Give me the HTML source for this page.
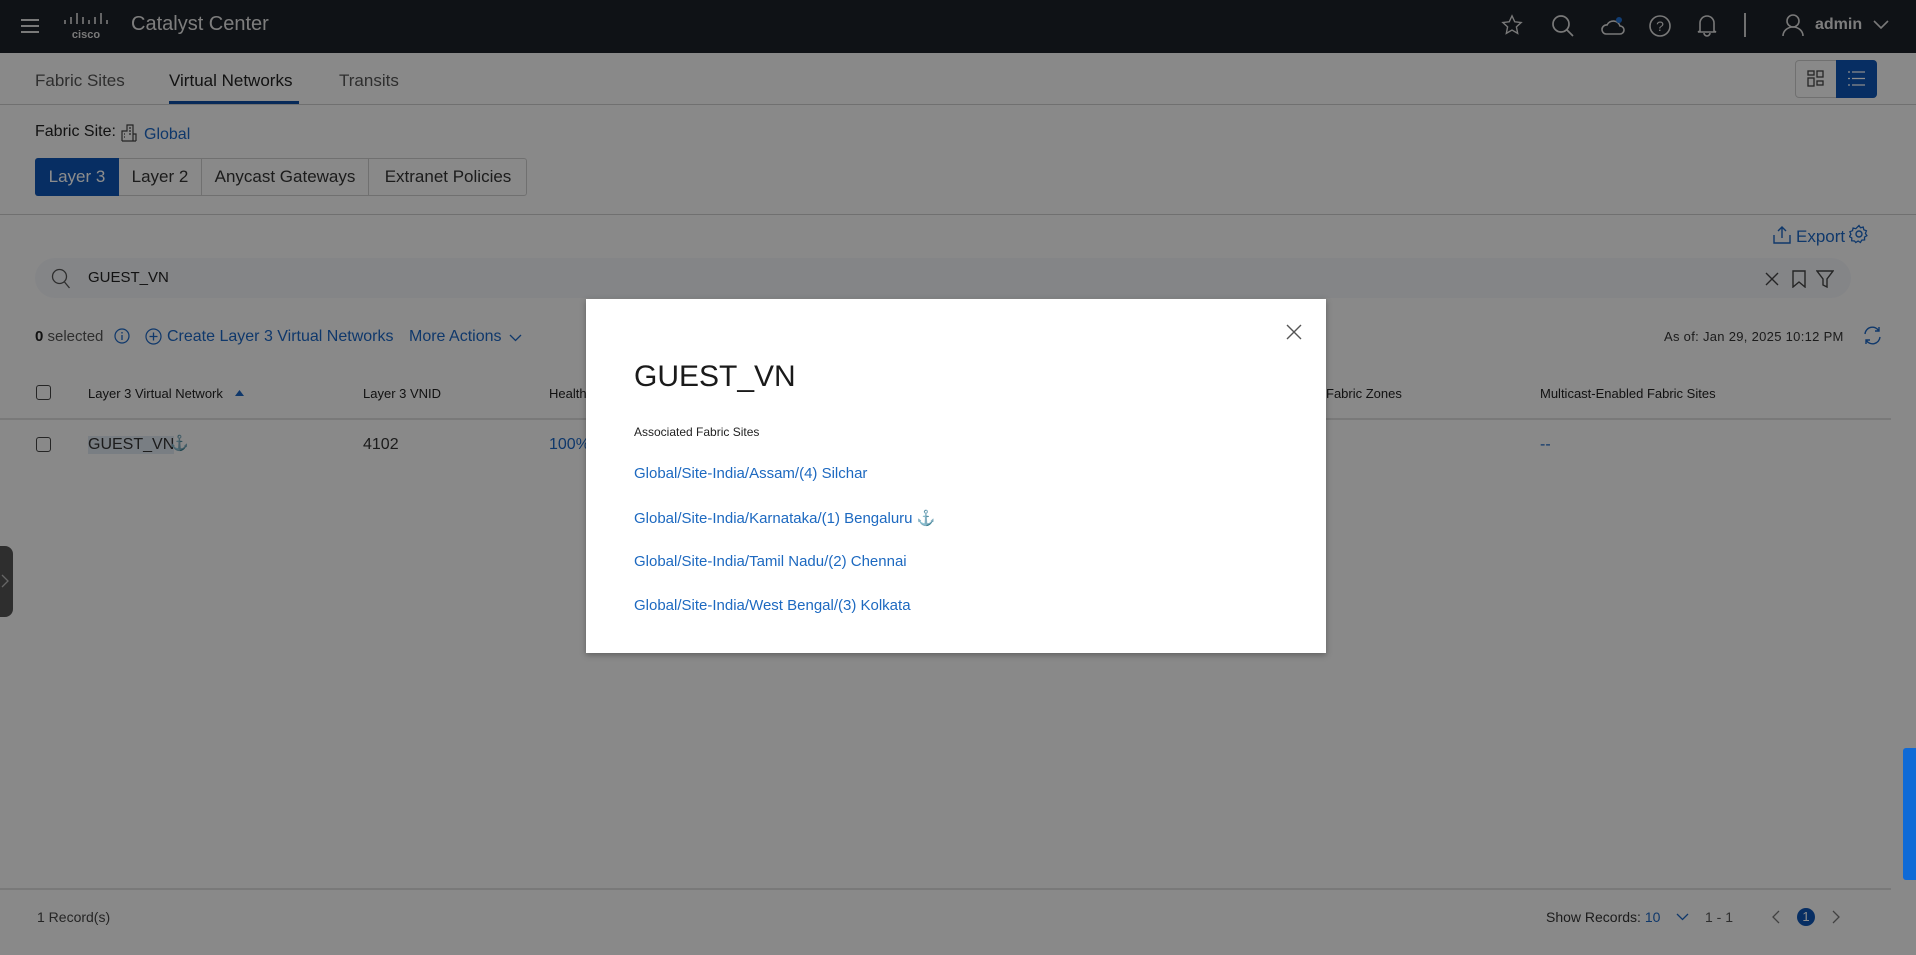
<!DOCTYPE html>
<html><head><meta charset="utf-8"><style>
*{box-sizing:border-box;margin:0;padding:0}
body{width:1916px;height:955px;overflow:hidden;position:relative;background:#fafafa;font-family:"Liberation Sans",sans-serif;color:#222}
.a{position:absolute;white-space:nowrap}
.hdr{left:0;top:0;width:1916px;height:53px;background:#1c2128}
.blue{color:#1c66c4}
.ico{position:absolute}
#ov{position:absolute;left:0;top:0;width:1916px;height:955px;background:rgba(0,0,0,.45)}
</style></head><body>
<div class="a hdr"></div>
<svg class="ico" style="left:20px;top:17px" width="20" height="18" viewBox="0 0 20 18"><path d="M1 3h18M1 9h18M1 15h18" stroke="#ddd" stroke-width="2"/></svg>
<svg class="ico" style="left:64px;top:12px" width="46" height="28" viewBox="0 0 46 28"><g stroke="#ddd" stroke-width="1.6"><path d="M2 8v4M8 5v7M14 1v11M20 5v7M26 8v4M32 5v7M38 1v11M44 8v4" transform="translate(-1,0)"/></g><text x="22" y="26" font-size="11" font-weight="bold" fill="#ddd" text-anchor="middle" font-family="Liberation Sans">cisco</text></svg>
<div class="a" style="left:131px;top:13px;font-size:20px;color:#e4e4e4">Catalyst Center</div>
<svg class="ico" style="left:1501px;top:14px" width="22" height="22" viewBox="0 0 24 24"><path d="M12 2l3 6.5 7 .8-5.2 4.8 1.4 7-6.2-3.6-6.2 3.6 1.4-7L2 9.3l7-.8z" fill="none" stroke="#ddd" stroke-width="1.5"/></svg>
<svg class="ico" style="left:1551px;top:14px" width="24" height="24" viewBox="0 0 24 24"><circle cx="10" cy="10" r="8" fill="none" stroke="#ddd" stroke-width="1.7"/><path d="M16 16l6 6" stroke="#ddd" stroke-width="1.7"/></svg>
<svg class="ico" style="left:1600px;top:14px" width="26" height="24" viewBox="0 0 26 24"><path d="M6 20h14a4 4 0 0 0 0-8 7 7 0 0 0-13-1 4.5 4.5 0 0 0-1 9z" fill="none" stroke="#ddd" stroke-width="1.6"/><circle cx="19" cy="6" r="3" fill="#1f6fd1"/></svg>
<svg class="ico" style="left:1648px;top:14px" width="24" height="24" viewBox="0 0 24 24"><circle cx="12" cy="12" r="10" fill="none" stroke="#ddd" stroke-width="1.6"/><text x="12" y="17" font-size="14" fill="#ddd" text-anchor="middle" font-family="Liberation Sans">?</text></svg>
<svg class="ico" style="left:1696px;top:13px" width="22" height="24" viewBox="0 0 22 24"><path d="M4 18V10a7 7 0 0 1 14 0v8l2 1H2zM8 20a3 3 0 0 0 6 0" fill="none" stroke="#ddd" stroke-width="1.6"/></svg>
<div class="a" style="left:1744px;top:13px;width:2px;height:24px;background:#ccc"></div>
<svg class="ico" style="left:1781px;top:13px" width="24" height="24" viewBox="0 0 24 24"><circle cx="12" cy="8" r="6" fill="none" stroke="#ddd" stroke-width="1.6"/><path d="M2 23a10 9 0 0 1 20 0" fill="none" stroke="#ddd" stroke-width="1.6"/></svg>
<div class="a" style="left:1815px;top:16px;font-size:16px;font-weight:bold;color:#e4e4e4">admin</div>
<svg class="ico" style="left:1873px;top:20px" width="16" height="10" viewBox="0 0 16 10"><path d="M1 1l7 7 7-7" fill="none" stroke="#ddd" stroke-width="1.6"/></svg>

<div class="a" style="left:35px;top:71px;font-size:17px;color:#555">Fabric Sites</div>
<div class="a" style="left:169px;top:71px;font-size:17px;color:#222">Virtual Networks</div>
<div class="a" style="left:169px;top:101px;width:130px;height:4px;background:#0d4ea3"></div>
<div class="a" style="left:339px;top:71px;font-size:17px;color:#555">Transits</div>
<div class="a" style="left:0;top:104px;width:1916px;height:1px;background:#ccc"></div>
<div class="a" style="left:1795px;top:60px;width:82px;height:38px;border:1px solid #ccc;border-radius:4px;background:#fafafa"></div>
<svg class="ico" style="left:1807px;top:70px" width="17" height="17" viewBox="0 0 17 17"><rect x="1" y="1" width="6" height="4" fill="none" stroke="#444" stroke-width="1.3"/><rect x="10" y="1" width="6" height="6" fill="none" stroke="#444" stroke-width="1.3"/><rect x="1" y="8" width="6" height="8" fill="none" stroke="#444" stroke-width="1.3"/><rect x="10" y="11" width="6" height="4" fill="none" stroke="#444" stroke-width="1.3"/></svg>
<div class="a" style="left:1836px;top:60px;width:41px;height:38px;background:#0d55b5;border-radius:0 4px 4px 0"></div>
<svg class="ico" style="left:1848px;top:71px" width="17" height="15" viewBox="0 0 17 15"><path d="M0 1h2M4 1h13M0 7.5h2M4 7.5h13M0 14h2M4 14h13" stroke="#fff" stroke-width="1.3"/></svg>

<div class="a" style="left:35px;top:123px;font-size:16px;color:#222">Fabric Site:</div>
<svg class="ico" style="left:121px;top:124px" width="16" height="18" viewBox="0 0 16 18"><path d="M1 17V7h5V1h6v16M1 17h14M3 10h1M3 13h1M8 4h2M8 7h2M8 10h2M12 10h3v7" fill="none" stroke="#444" stroke-width="1.2"/></svg>
<div class="a blue" style="left:144px;top:126px;font-size:16px">Global</div>

<div class="a" style="left:35px;top:158px;width:492px;height:38px;border:1px solid #ccc;border-radius:3px;background:#fafafa"></div>
<div class="a" style="left:35px;top:158px;width:84px;height:38px;background:#0d55b5;border-radius:3px 0 0 3px;color:#fff;font-size:17px;line-height:38px;text-align:center">Layer 3</div>
<div class="a" style="left:119px;top:158px;width:83px;height:38px;color:#333;font-size:17px;line-height:38px;text-align:center;border-right:1px solid #ccc">Layer 2</div>
<div class="a" style="left:202px;top:158px;width:167px;height:38px;color:#333;font-size:17px;line-height:38px;text-align:center;border-right:1px solid #ccc">Anycast Gateways</div>
<div class="a" style="left:369px;top:158px;width:158px;height:38px;color:#333;font-size:17px;line-height:38px;text-align:center">Extranet Policies</div>
<div class="a" style="left:0;top:214px;width:1916px;height:1px;background:#ccc"></div>

<svg class="ico" style="left:1773px;top:226px" width="18" height="18" viewBox="0 0 18 18"><path d="M1 9v8h16V9M9 12V1M5 5l4-4 4 4" fill="none" stroke="#1c66c4" stroke-width="1.4"/></svg>
<div class="a blue" style="left:1796px;top:227px;font-size:17px">Export</div>
<svg class="ico" style="left:1849px;top:224px" width="20" height="20" viewBox="0 0 20 20"><circle cx="10" cy="10" r="3" fill="none" stroke="#1c66c4" stroke-width="1.4"/><path d="M10 1.5l1.5 2.3 2.7-.7.6 2.7 2.6 1-1 2.6 1.5 2.3-2.4 1.4.1 2.8-2.8.2-1.4 2.4-2.3-1.5-2.3 1.5L5.5 17l-2.8-.2.1-2.8L.4 12.6 1.9 10.3.9 7.7l2.6-1 .6-2.7 2.7.7z" fill="none" stroke="#1c66c4" stroke-width="1.3"/></svg>

<div class="a" style="left:35px;top:258px;width:1816px;height:40px;background:#f0f2f6;border-radius:20px"></div>
<svg class="ico" style="left:51px;top:268px" width="20" height="21" viewBox="0 0 20 21"><circle cx="8.5" cy="8.5" r="7" fill="none" stroke="#555" stroke-width="1.3"/><path d="M13.5 14l5 6" stroke="#555" stroke-width="1.3"/></svg>
<div class="a" style="left:88px;top:269px;font-size:15px;color:#222">GUEST_VN</div>
<svg class="ico" style="left:1765px;top:272px" width="14" height="14" viewBox="0 0 14 14"><path d="M1 1l12 12M13 1L1 13" stroke="#444" stroke-width="1.4"/></svg>
<svg class="ico" style="left:1792px;top:270px" width="14" height="18" viewBox="0 0 14 18"><path d="M1 1h12v16l-6-5-6 5z" fill="none" stroke="#444" stroke-width="1.4"/></svg>
<svg class="ico" style="left:1816px;top:270px" width="18" height="18" viewBox="0 0 18 18"><path d="M1 1h16l-6 8v8l-4-2V9z" fill="none" stroke="#444" stroke-width="1.4"/></svg>

<div class="a" style="left:35px;top:328px;font-size:15px;color:#555"><b style="color:#222">0</b> selected</div>
<svg class="ico" style="left:114px;top:328px" width="16" height="16" viewBox="0 0 16 16"><circle cx="8" cy="8" r="7" fill="none" stroke="#1c66c4" stroke-width="1.2"/><path d="M8 7v5M8 4v1.5" stroke="#1c66c4" stroke-width="1.3"/></svg>
<svg class="ico" style="left:145px;top:328px" width="17" height="17" viewBox="0 0 17 17"><circle cx="8.5" cy="8.5" r="7.5" fill="none" stroke="#1c66c4" stroke-width="1.2"/><path d="M8.5 4.5v8M4.5 8.5h8" stroke="#1c66c4" stroke-width="1.3"/></svg>
<div class="a blue" style="left:167px;top:328px;font-size:16px">Create Layer 3 Virtual Networks</div>
<div class="a blue" style="left:409px;top:328px;font-size:16px">More Actions</div>
<svg class="ico" style="left:509px;top:334px" width="13" height="8" viewBox="0 0 13 8"><path d="M1 1l5.5 5.5L12 1" fill="none" stroke="#1c66c4" stroke-width="1.3"/></svg>
<div class="a" style="left:1664px;top:329px;font-size:13px;color:#333;letter-spacing:.3px">As of: Jan 29, 2025 10:12 PM</div>
<svg class="ico" style="left:1863px;top:326px" width="19" height="19" viewBox="0 0 19 19"><path d="M2 8a7.5 7.5 0 0 1 14-3M17 11a7.5 7.5 0 0 1-14 3M16 1v4h-4M3 18v-4h4" fill="none" stroke="#1c66c4" stroke-width="1.4"/></svg>

<div class="a" style="left:36px;top:385px;width:15px;height:15px;border:1.5px solid #444;border-radius:3px"></div>
<div class="a" style="left:88px;top:386px;font-size:13px;color:#222">Layer 3 Virtual Network</div>
<svg class="ico" style="left:235px;top:390px" width="9" height="6" viewBox="0 0 9 6"><path d="M0 6L4.5 0 9 6z" fill="#1c66c4"/></svg>
<div class="a" style="left:363px;top:386px;font-size:13px;color:#222">Layer 3 VNID</div>
<div class="a" style="left:549px;top:386px;font-size:13px;color:#222">Health</div>
<div class="a" style="left:1326px;top:386px;font-size:13px;color:#222">Fabric Zones</div>
<div class="a" style="left:1540px;top:386px;font-size:13px;color:#222">Multicast-Enabled Fabric Sites</div>
<div class="a" style="left:0;top:418px;width:1891px;height:2px;background:#ddd"></div>
<div class="a" style="left:36px;top:437px;width:15px;height:15px;border:1.5px solid #444;border-radius:3px"></div>
<div class="a" style="left:88px;top:436px;font-size:16px;color:#333;background:#dde5ef">GUEST_VN</div>
<div class="a" style="left:170px;top:434px;font-size:15px;color:#777">⚓</div>
<div class="a" style="left:363px;top:436px;font-size:16px;color:#333">4102</div>
<div class="a blue" style="left:549px;top:436px;font-size:16px">100%</div>
<div class="a blue" style="left:1540px;top:436px;font-size:16px">--</div>

<div class="a" style="left:-8px;top:546px;width:21px;height:71px;background:#555;border-radius:8px"></div>
<svg class="ico" style="left:1px;top:574px" width="8" height="14" viewBox="0 0 8 14"><path d="M1 1l6 6-6 6" fill="none" stroke="#bbb" stroke-width="1.3"/></svg>

<div class="a" style="left:0;top:888px;width:1891px;height:2px;background:#ddd"></div>
<div class="a" style="left:37px;top:909px;font-size:14px;color:#444">1 Record(s)</div>
<div class="a" style="left:1546px;top:909px;font-size:14px;color:#333">Show Records: <span class="blue">10</span></div>
<svg class="ico" style="left:1676px;top:913px" width="13" height="8" viewBox="0 0 13 8"><path d="M1 1l5.5 5.5L12 1" fill="none" stroke="#1c66c4" stroke-width="1.3"/></svg>
<div class="a" style="left:1705px;top:909px;font-size:14px;color:#555">1 - 1</div>
<svg class="ico" style="left:1772px;top:910px" width="8" height="14" viewBox="0 0 8 14"><path d="M7 1L1 7l6 6" fill="none" stroke="#777" stroke-width="1.3"/></svg>
<div class="a" style="left:1797px;top:908px;width:18px;height:18px;border-radius:50%;background:#0d55b5;color:#fff;font-size:13px;line-height:18px;text-align:center">1</div>
<svg class="ico" style="left:1832px;top:910px" width="8" height="14" viewBox="0 0 8 14"><path d="M1 1l6 6-6 6" fill="none" stroke="#777" stroke-width="1.3"/></svg>

<div id="ov"></div>
<div class="a" style="left:1903px;top:748px;width:13px;height:132px;background:#0f6ad6;border-radius:3px 0 0 3px"></div>

<div class="a" style="left:586px;top:299px;width:740px;height:354px;background:#fff;box-shadow:0 2px 6px rgba(0,0,0,.3)"></div>
<svg class="ico" style="left:1286px;top:324px" width="16" height="16" viewBox="0 0 16 16"><path d="M1 1l14 14M15 1L1 15" stroke="#555" stroke-width="1.4"/></svg>
<div class="a" style="left:634px;top:360px;font-size:30px;color:#1a1a1a">GUEST_VN</div>
<div class="a" style="left:634px;top:425px;font-size:12px;color:#222">Associated Fabric Sites</div>
<div class="a" style="left:634px;top:465px;font-size:15px;color:#1d69c0">Global/Site-India/Assam/(4) Silchar</div>
<div class="a" style="left:634px;top:509px;font-size:15px;color:#1d69c0">Global/Site-India/Karnataka/(1) Bengaluru <span style="color:#888">⚓</span></div>
<div class="a" style="left:634px;top:553px;font-size:15px;color:#1d69c0">Global/Site-India/Tamil Nadu/(2) Chennai</div>
<div class="a" style="left:634px;top:597px;font-size:15px;color:#1d69c0">Global/Site-India/West Bengal/(3) Kolkata</div>
</body></html>
